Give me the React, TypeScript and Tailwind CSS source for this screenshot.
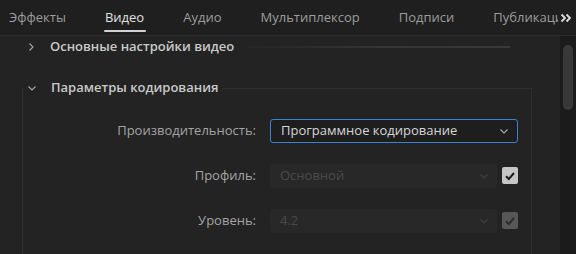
import React from "react";

const Chevron = ({ dir, className }: { dir: "right" | "down"; className?: string }) => (
  <svg width="10" height="10" viewBox="0 0 10 10" className={className}>
    {dir === "right" ? (
      <path d="M3.5 1.5 L7 5 L3.5 8.5" fill="none" stroke="currentColor" strokeWidth="1.1" />
    ) : (
      <path d="M1.5 3.5 L5 7 L8.5 3.5" fill="none" stroke="currentColor" strokeWidth="1.1" />
    )}
  </svg>
);

const Check = ({ color }: { color: string }) => (
  <svg width="12" height="12" viewBox="0 0 12 12">
    <path d="M2 6.2 L4.8 9 L10 3" fill="none" stroke={color} strokeWidth="2" />
  </svg>
);

function Row({
  label,
  value,
  active,
  checkDim,
}: {
  label: string;
  value: string;
  active?: boolean;
  checkDim?: boolean;
}) {
  return (
    <div className="flex items-center h-[24px]">
      <div className="w-[233px] text-right text-[13px] text-[#a3a3a3]">{label}</div>
      <div className="w-[14px]" />
      {active ? (
        <div className="w-[248px] h-[24px] rounded-[3px] border border-[#3f7fcf] bg-[#1e1e1e] flex items-center pl-[10px] pr-[8px]">
          <span className="flex-1 text-[13px] text-[#d6d6d6]">{value}</span>
          <Chevron dir="down" className="text-[#a8a8a8]" />
        </div>
      ) : (
        <>
          <div className="w-[227px] h-[24px] rounded-[3px] bg-[#282828] flex items-center pl-[10px] pr-[8px]">
            <span className="flex-1 text-[13px] text-[#4a4a4a]">{value}</span>
            <Chevron dir="down" className="text-[#404040]" />
          </div>
          <div className="w-[5px]" />
          <div
            className={
              checkDim
                ? "w-[16px] h-[17px] rounded-[2px] bg-[#575757] flex items-center justify-center"
                : "w-[16px] h-[17px] rounded-[2px] bg-[#c6c6c6] flex items-center justify-center"
            }
          >
            <Check color={checkDim ? "#2c2c2c" : "#1c1c1c"} />
          </div>
        </>
      )}
    </div>
  );
}

export default function App() {
  const tabs = ["Эффекты", "Видео", "Аудио", "Мультиплексор", "Подписи", "Публикация"];
  return (
    <div className="w-[576px] h-[254px] bg-[#232323] overflow-hidden flex flex-col font-['Open_Sans',sans-serif]">
      <div className="h-[36px] shrink-0 bg-[#1f1f1f] border-b border-[#2b2b2b] flex items-center relative">
        <div className="flex-1 flex items-center gap-[39px] pl-[9px] overflow-hidden h-full whitespace-nowrap">
          {tabs.map((t) => (
            <span
              key={t}
              className={
                t === "Видео"
                  ? "relative text-[13px] text-[#e2e2e2] h-full flex items-center"
                  : "relative text-[13px] text-[#9d9d9d] h-full flex items-center"
              }
            >
              {t}
              {t === "Видео" && (
                <span className="absolute left-[-1px] right-[-2px] bottom-[3px] h-[2px] rounded-full bg-[#d2d2d2]" />
              )}
            </span>
          ))}
        </div>
        <div className="w-[16px] h-full shrink-0 bg-[#1f1f1f] flex items-center justify-center mr-[2px]">
          <svg width="12" height="10" viewBox="0 0 12 10">
            <path d="M1.5 1.5 L5 5 L1.5 8.5 M6.5 1.5 L10 5 L6.5 8.5" fill="none" stroke="#dedede" strokeWidth="1.8" />
          </svg>
        </div>
      </div>
      <div className="flex-1 flex min-h-0">
        <div className="flex-1 flex flex-col min-w-0">
          <div className="h-[20px] mt-[1px] flex items-center">
            <Chevron dir="right" className="ml-[26px] text-[#a8a8a8]" />
            <span className="ml-[14px] text-[13px] font-semibold text-[#c9c9c9]">Основные настройки видео</span>
            <div className="ml-[14px] mr-[50px] flex-1 h-[2px] bg-gradient-to-r from-[#262626] via-[#343434] to-[#3a3a3a]" />
          </div>
          <div className="mt-[31px] ml-[22px] w-[510px] flex-1 border-l border-t border-r border-[#2e2e2e] flex flex-col">
            <div className="-mt-[11px] h-[20px] flex items-center">
              <div className="bg-[#232323] flex items-center pr-[4px]">
                <Chevron dir="down" className="ml-[4px] text-[#a8a8a8]" />
                <span className="ml-[14px] text-[13px] font-semibold text-[#c9c9c9]">Параметры кодирования</span>
              </div>
            </div>
            <div className="mt-[21px] flex flex-col gap-[21px]">
              <Row label="Производительность:" value="Программное кодирование" active />
              <Row label="Профиль:" value="Основной" />
              <Row label="Уровень:" value="4.2" checkDim />
            </div>
            <div className="mt-[21px] ml-[10px] w-[16px] h-[16px] rounded-[2px] bg-[#4a4a4a]" />
          </div>
        </div>
        <div className="w-[16px] shrink-0 bg-[#1b1b1b] pt-[9px] flex justify-center">
          <div className="w-[10px] h-[65px] rounded-full bg-[#383838]" />
        </div>
      </div>
    </div>
  );
}
